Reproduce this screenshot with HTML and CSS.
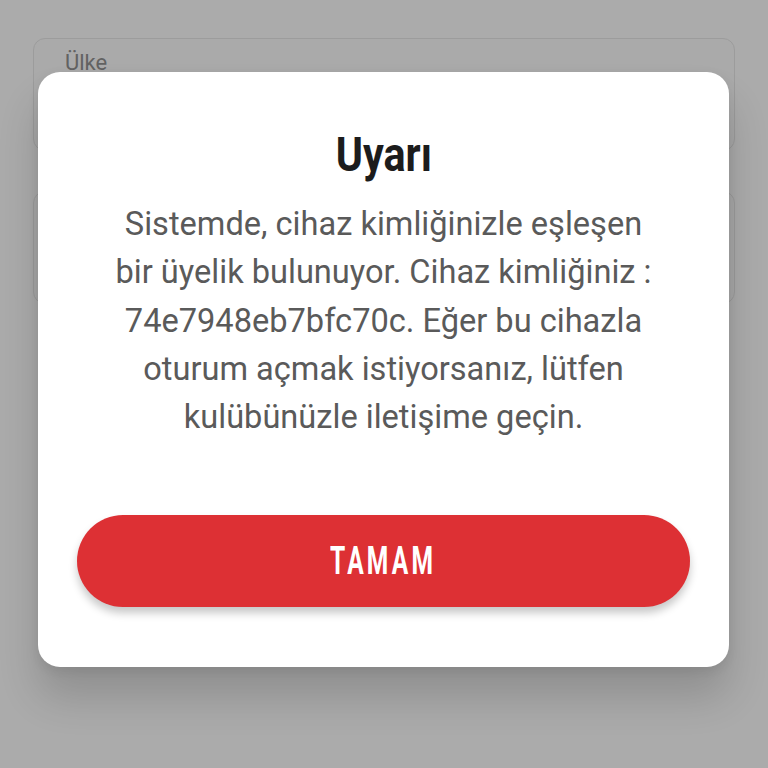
FILE: index.html
```html
<!DOCTYPE html>
<html lang="tr">
<head>
  <meta charset="UTF-8">
  <meta name="viewport" content="width=device-width, initial-scale=1.0">
  <title>Uyarı</title>
  <link rel="stylesheet" href="styles.css">
</head>
<body>
  <div class="form">
    <div class="field">
      <div class="field-label">Ülke</div>
    </div>
    <div class="field"></div>
  </div>

  <div class="dialog">
    <div class="dialog-title"><span>Uyarı</span></div>
    <p class="dialog-text">Sistemde, cihaz kimliğinizle eşleşen bir üyelik bulunuyor. Cihaz kimliğiniz : 74e7948eb7bfc70c. Eğer bu cihazla oturum açmak istiyorsanız, lütfen kulübünüzle iletişime geçin.</p>
    <button class="dialog-btn"><span>TAMAM</span></button>
  </div>
</body>
</html>
```

FILE: styles.css
```css
body {
  margin: 0;
  width: 768px;
  height: 768px;
  background: #ababab;
  font-family: Roboto, 'Noto Sans', sans-serif;
  position: relative;
  overflow: hidden;
}
.form {
  padding: 38px 33px 0 33px;
  display: flex;
  flex-direction: column;
  gap: 40px;
}
.field {
  height: 113px;
  border: 1.5px solid #9c9c9c;
  border-radius: 12px;
  background: #aaaaaa;
  padding: 11px 31px;
  box-sizing: border-box;
}
.field-label {
  font-size: 22px;
  color: #626262;
}
/* modal over the form */
.dialog {
  position: absolute;
  top: 72px;
  left: 38px;
  width: 691px;
  height: 595px;
  box-sizing: border-box;
  background: #fff;
  border-radius: 22px;
  box-shadow: 0 30px 40px rgba(0,0,0,0.16), 0 4px 12px rgba(0,0,0,0.08);
  padding: 55px 39px 60px 39px;
  display: flex;
  flex-direction: column;
  align-items: center;
}
.dialog-title {
  font-size: 48px;
  line-height: 56px;
  font-weight: 700;
  color: #1c1c1c;
  text-align: center;
}
.dialog-title span {
  display: inline-block;
  transform: scaleX(0.86);
}
.dialog-text {
  margin: 17px 0 0 0;
  width: 556px;
  font-size: 32.6px;
  line-height: 48.3px;
  color: #5a5a5a;
  text-align: center;
}
.dialog-btn {
  margin-top: auto;
  width: 613px;
  height: 92px;
  border: none;
  border-radius: 46px;
  background: #dd3034;
  color: #fff;
  font-family: Roboto, sans-serif;
  font-size: 39px;
  font-weight: 700;
  letter-spacing: 5px;
  box-shadow: 0 6px 8px rgba(0,0,0,0.22);
  cursor: pointer;
}
.dialog-btn span {
  display: inline-block;
  transform: scaleX(0.63);
}
```
